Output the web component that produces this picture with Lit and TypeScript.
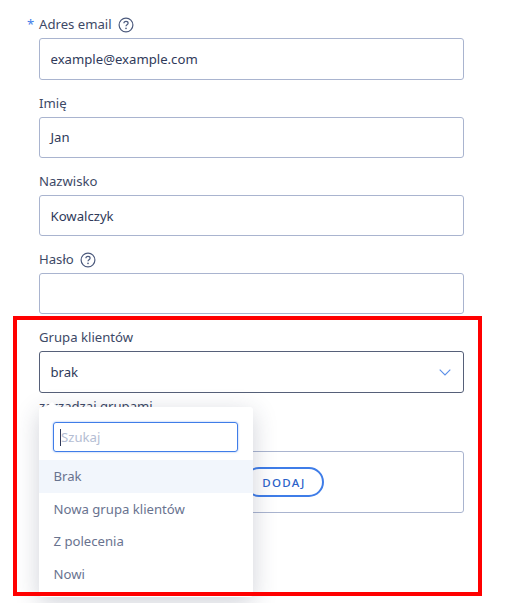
import { LitElement, css, html } from 'lit';

const helpIcon = html`<svg class="help" width="16" height="16" viewBox="0 0 16 16" fill="none">
  <circle cx="8" cy="8" r="6.9" stroke="#4c5a7d" stroke-width="1.2"></circle>
  <path d="M5.9 6.3c0-1.2.9-1.9 2.1-1.9s2.1.8 2.1 1.8c0 1.6-2.1 1.6-2.1 3.1" stroke="#4c5a7d" stroke-width="1.2"></path>
  <circle cx="8" cy="11.4" r=".8" fill="#4c5a7d"></circle>
</svg>`;

export class AppRoot extends LitElement {
  static styles = css`
    :host {
      display: block;
      position: relative;
      width: 511px;
      height: 603px;
      overflow: hidden;
      background: #fff;
      font-family: 'Noto Sans', 'Open Sans', sans-serif;
      font-size: 13.15px;
      color: #3d4966;
    }
    .form {
      display: flex;
      flex-direction: column;
      gap: 13px;
      padding: 14.4px 47px 0 39px;
    }
    .field {
      display: flex;
      flex-direction: column;
      gap: 3px;
    }
    .label {
      display: flex;
      align-items: center;
      gap: 6px;
      height: 21px;
      line-height: 21px;
      position: relative;
    }
    .star {
      position: absolute;
      left: -12px;
      color: #3f7de8;
    }
    .input {
      display: flex;
      align-items: center;
      justify-content: space-between;
      box-sizing: border-box;
      height: 41.25px;
      padding: 0 12px 0 10.5px;
      border: 1px solid #a9b4cf;
      border-radius: 3px;
      color: #2f3a5a;
    }
    .input.open {
      border-color: #566079;
    }
    .link {
      height: 21px;
      line-height: 21px;
      color: #3d4966;
    }
    .box {
      display: flex;
      align-items: center;
      box-sizing: border-box;
      height: 62px;
      margin-top: 31.6px;
      padding-left: 204px;
      border: 1px solid #a9b4cf;
      border-radius: 3px;
    }
    .add {
      box-sizing: border-box;
      width: 80px;
      height: 30px;
      border: 2px solid #3f7de8;
      border-radius: 15px;
      background: #fff;
      color: #2b62c9;
      font: 500 11.5px 'Noto Sans', sans-serif;
      letter-spacing: 1.3px;
      padding: 0;
    }
    .menu {
      position: absolute;
      left: 39px;
      top: 407px;
      width: 214px;
      height: 190px;
      background: #fff;
      border-radius: 3px;
      box-shadow: 0 6px 24px rgba(40, 50, 80, 0.22);
    }
    .menu::before {
      content: '';
      position: absolute;
      left: 7px;
      top: -5px;
      border: 6px solid transparent;
      border-top: 0;
      border-bottom: 5px solid #fff;
    }
    .search {
      display: flex;
      align-items: center;
      box-sizing: border-box;
      height: 30px;
      margin: 15px 15px 8px 14px;
      padding-left: 6px;
      border: 1px solid #3f7de8;
      border-radius: 3px;
      box-shadow: 0 0 2px rgba(63, 125, 232, 0.6);
      color: #b4bdd3;
    }
    .caret {
      width: 1px;
      height: 17px;
      background: #2f3a5a;
    }
    .option {
      height: 32.5px;
      line-height: 32.5px;
      padding-left: 14.5px;
      color: #69738f;
    }
    .option.active {
      background: #f2f6fc;
    }
    .frame {
      position: absolute;
      left: 13px;
      top: 316px;
      width: 469px;
      height: 280px;
      box-sizing: border-box;
      border: 4px solid #ff0000;
      pointer-events: none;
    }
  `;

  render() {
    return html`
      <div class="form">
        <div class="field">
          <div class="label"><span class="star">*</span>Adres email ${helpIcon}</div>
          <div class="input">example@example.com</div>
        </div>
        <div class="field">
          <div class="label">Imię</div>
          <div class="input">Jan</div>
        </div>
        <div class="field">
          <div class="label">Nazwisko</div>
          <div class="input">Kowalczyk</div>
        </div>
        <div class="field">
          <div class="label">Hasło ${helpIcon}</div>
          <div class="input"></div>
        </div>
        <div class="field">
          <div class="label">Grupa klientów</div>
          <div class="input open">
            brak
            <svg width="12" height="7" viewBox="0 0 12 7" fill="none">
              <path d="M.7.7 6 6 11.3.7" stroke="#5b8fe8" stroke-width="1.1"></path>
            </svg>
          </div>
          <div class="link">zarządzaj grupami</div>
          <div class="box"><button class="add">DODAJ</button></div>
        </div>
      </div>
      <div class="menu">
        <div class="search"><span class="caret"></span>Szukaj</div>
        <div class="option active">Brak</div>
        <div class="option">Nowa grupa klientów</div>
        <div class="option">Z polecenia</div>
        <div class="option">Nowi</div>
      </div>
      <div class="frame"></div>
    `;
  }
}

customElements.define('app-root', AppRoot);
